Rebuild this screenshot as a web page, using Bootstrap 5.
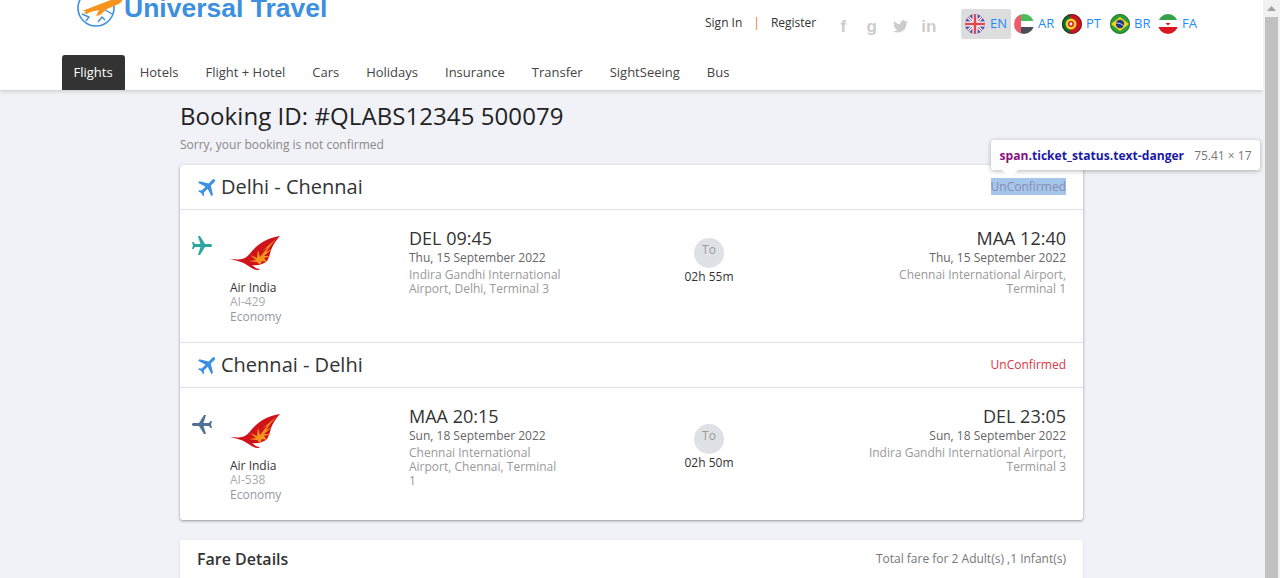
<!DOCTYPE html>
<html lang="en">

<head>
    <meta charset="UTF-8">
    <meta name="viewport" content="width=device-width, initial-scale=1">
    <title>Universal Travel - Booking</title>
    <link href="https://cdn.jsdelivr.net/npm/bootstrap@5.3.0/dist/css/bootstrap.min.css" rel="stylesheet">
    <style>
        html, body { height: 578px; overflow: hidden; }
        body {
            background: #f1f2f7;
            font-family: "Open Sans", "Liberation Sans", sans-serif;
            font-size: 12px;
            color: #333;
        }
        .page-area { width: 1263px; height: 578px; overflow: hidden; flex: none; }
        .fake-scroll { width: 17px; height: 578px; background: #f1f1f1; flex: none; position: relative; }
        .fake-arrow { height: 17px; display: flex; align-items: center; justify-content: center; }
        .fake-thumb { margin: 0 2px; background: #c1c1c1; height: 561px; }

        .site-head { background: #fff; height: 90px; box-shadow: 0 1px 4px rgba(0,0,0,.2); position: relative; }
        .head-wrap { width: 1139px; margin: 0 auto; }
        .head-top { height: 55px; overflow: hidden; }
        .brand-box { margin-left: 14px; width: 300px; height: 40px; margin-top: -40px; flex: none; }
        .brand-name { font-family: "Liberation Sans", sans-serif; font-weight: 700; font-size: 26.5px; color: #3d8fe0; line-height: 34px; margin-top: 0; }
        .sign-links { margin-left: 329px; width: 124px; margin-top: -9px; }
        .sign-links a { color: #333; text-decoration: none; }
        .sign-sep { color: #e8702a; margin: 0 11px; }
        .social-set { width: 117px; margin-top: -2px; color: #ccc; }
        .social-set span { width: 28.5px; text-align: center; font-weight: 700; font-size: 17px; line-height: 20px; font-family: "Liberation Sans", sans-serif; }
        .lang-set { margin-top: -7px; margin-left: 15px; }
        .lang-item { display: flex; align-items: center; height: 30px; width: 48px; padding-left: 3px; color: #1e8bff; font-size: 13px; text-decoration: none; gap: 4px; }
        .lang-item.on { background: #ddd; width: 50px; padding-left: 4px; gap: 5px; border-radius: 2px; }
        .lang-item svg { flex: none; }

        .tab-strip { height: 35px; gap: 3px; }
        .tab-link { color: #444; padding: 0 12px; line-height: 35px; font-size: 13px; text-decoration: none; border-radius: 3px 3px 0 0; }
        .tab-link.on { background: #333; color: #fff; padding: 0 12px 0 11.5px; }

        .body-wrap { width: 903px; margin: 0 auto; }
        .page-title { font-size: 24px; font-weight: 400; color: #222; margin: 0; line-height: 33px; padding-top: 9px; letter-spacing: .07px; }
        .page-note { color: #888; line-height: 17px; margin-top: 4px; margin-bottom: 12px; }

        .trip-card { border: 0; border-radius: 3px; box-shadow: 0 1px 3px rgba(0,0,0,.4); }
        .leg-head { height: 45px; padding: 0 17px 0 16px; border-bottom: 1px solid #e2e2e6; }
        .leg-title { font-size: 20px; color: #333; line-height: 26px; margin-left: 1px; }
        .leg-body { height: 133px; padding-top: 25px; border-bottom: 1px solid #e2e2e6; }
        .leg-body.last { height: 132px; border-bottom: 0; }
        .plane-col { width: 50px; padding-left: 10px; }
        .plane-col svg { margin-top: -1px; }
        .carrier-col { width: 179px; padding-top: 1px; }
        .carrier-name { color: #333; line-height: 14px; margin-top: 10px; }
        .soft-text { color: #999; line-height: 14px; }
        .carrier-code { color: #aaa; line-height: 14px; }
        .carrier-cabin { color: #949aa3; line-height: 15px; }
        .from-col { width: 153px; }
        .time-text { font-size: 18px; color: #333; line-height: 24px; margin-top: -9px; }
        .date-text { color: #666; line-height: 16px; margin-bottom: 2px; }
        .mid-col { width: 294px; text-align: center; }
        .to-dot { width: 30px; height: 30px; border-radius: 50%; background: #e0e1e6; color: #999; margin: 3px auto 0; line-height: 24px; }
        .leg-body.last .to-dot { margin-top: 11px; }
        .dur-text { color: #333; line-height: 17px; }
        .to-col { width: 210px; text-align: right; }

        .status-tag { color: #dc3545; position: relative; line-height: 17px; margin-bottom: 2px; }
        .status-tag.picked { color: #8b8bb5; background: #a4c6ea; }
        .dev-tip {
            position: absolute; left: 0; top: -38px; height: 30px; width: 269px;
            background: #fff; border-radius: 3px; box-shadow: 0 1px 5px rgba(0,0,0,.3);
            white-space: nowrap; line-height: 31px; padding-left: 9px; font-weight: 700; font-size: 12.1px; color: #1a1aa6;
        }
        .dev-tip::after {
            content: ""; position: absolute; left: 11px; top: 30px;
            border: 8px solid transparent; border-top-color: #fff; border-bottom: 0;
        }
        .dev-tip b { color: #881280; font-weight: 700; }
        .dev-tip i { font-style: normal; font-weight: 400; font-size: 12px; color: #777; margin-left: 10px; }

        .fare-card { margin-top: 20px; border: 0; border-radius: 3px; height: 60px; padding: 0 17px; box-shadow: 0 1px 3px rgba(0,0,0,.1); }
        .fare-head { height: 38px; }
        .fare-title { font-size: 16px; font-weight: 600; color: #333; }
        .fare-note { color: #777; }
    </style>
</head>

<body class="d-flex">
    <svg width="0" height="0" class="position-absolute">
        <defs>
            <path id="planeUp" d="M21 16v-2l-8-5V3.5c0-.83-.67-1.5-1.5-1.5S10 2.67 10 3.5V9l-8 5v2l8-2.5V19l-2 1.5V22l3.5-1 3.5 1v-1.5L13 19v-5.5l8 2.5z" />
            <g id="airLogo">
                <path fill="#d0131b" d="M50 0C38 2 29 7 22 15c-3 4-6 7-10 8-4 1-8 0-12 0 4 1 8 2 11 3 6 2 10 7 16 8 1 0 2 0 3-1-3 0-6-2-8-4 6 1 12-1 15-4 2-3 3-7 4-11 2-5 5-10 9-14z" />
                <path fill="#f7941d" d="M46 3 32 15l6-4-8 10-2-7-1 8-7-3 6 5-7 1 8 1 3 3 2-4 5 1-3-4 7-2-7 0 8-7-6 3 5-7z" />
            </g>
        </defs>
    </svg>

    <div class="page-area">
        <header class="site-head">
            <div class="head-wrap">
                <div class="head-top d-flex align-items-center">
                    <div class="brand-box d-flex align-items-center">
                        <svg width="48" height="40" viewBox="0 0 48 40" class="flex-shrink-0">
                            <circle cx="20" cy="20" r="18" fill="none" stroke="#3d8fe0" stroke-width="1.6" />
                            <path d="M6 26l7 3-3 4M22 34l4-5 3 3M26 20l10 6" fill="none" stroke="#3d8fe0" stroke-width="1.4" />
                            <path fill="#f7941d" d="M6 23 40 10c4-1 7 0 6 3-1 2-5 4-8 5l-7 3-7 6-4 1 3-6-9 2-3 2-3-1 2-2z" />
                        </svg>
                        <span class="brand-name text-nowrap">Universal Travel</span>
                    </div>
                    <div class="sign-links flex-shrink-0 d-flex text-nowrap">
                        <a href="#">Sign In</a><span class="sign-sep">|</span><a href="#">Register</a>
                    </div>
                    <div class="social-set d-flex align-items-center flex-shrink-0">
                        <span>f</span><span>g</span>
                        <span class="d-flex justify-content-center"><svg width="15" height="15" viewBox="0 0 24 24" fill="#ccc"><path d="M23.953 4.57a10 10 0 01-2.825.775 4.958 4.958 0 002.163-2.723c-.951.555-2.005.959-3.127 1.184a4.92 4.92 0 00-8.384 4.482C7.69 8.095 4.067 6.13 1.64 3.162a4.822 4.822 0 00-.666 2.475c0 1.71.87 3.213 2.188 4.096a4.904 4.904 0 01-2.228-.616v.06a4.923 4.923 0 003.946 4.827 4.996 4.996 0 01-2.212.085 4.936 4.936 0 004.604 3.417 9.867 9.867 0 01-6.102 2.105c-.39 0-.779-.023-1.17-.067a13.995 13.995 0 007.557 2.209c9.053 0 13.998-7.496 13.998-13.985 0-.21 0-.42-.015-.63A9.935 9.935 0 0024 4.59z"/></svg></span>
                        <span>in</span>
                    </div>
                    <div class="lang-set d-flex flex-shrink-0">
                        <a href="#" class="lang-item on">
                            <svg width="20" height="20" viewBox="0 0 20 20"><defs><clipPath id="cl"><circle cx="10" cy="10" r="10"/></clipPath></defs><g clip-path="url(#cl)"><rect width="20" height="20" fill="#4a5aa8"/><path d="M0 0 20 20M20 0 0 20" stroke="#fff" stroke-width="3"/><path d="M0 0 20 20M20 0 0 20" stroke="#e0465a" stroke-width="1"/><path d="M10 0V20M0 10H20" stroke="#fff" stroke-width="5"/><path d="M10 0V20M0 10H20" stroke="#e0465a" stroke-width="2.6"/></g></svg>
                            EN
                        </a>
                        <a href="#" class="lang-item">
                            <svg width="20" height="20" viewBox="0 0 20 20"><g clip-path="url(#cl)"><rect width="20" height="7" fill="#4cbb5c"/><rect y="7" width="20" height="6" fill="#fff"/><rect y="13" width="20" height="7" fill="#4a4f57"/><rect width="7" height="20" fill="#f05a6a"/></g></svg>
                            AR
                        </a>
                        <a href="#" class="lang-item">
                            <svg width="20" height="20" viewBox="0 0 20 20"><g clip-path="url(#cl)"><rect width="20" height="20" fill="#c9161d"/><rect width="8" height="20" fill="#0e6b2c"/><circle cx="9" cy="10" r="5.5" fill="#f2d12e"/><circle cx="9" cy="10" r="3" fill="#d8232a"/><circle cx="9" cy="10" r="1.4" fill="#fff"/></g><circle cx="10" cy="10" r="9.5" fill="none" stroke="#222" stroke-opacity=".6"/></svg>
                            PT
                        </a>
                        <a href="#" class="lang-item">
                            <svg width="20" height="20" viewBox="0 0 20 20"><g clip-path="url(#cl)"><rect width="20" height="20" fill="#2e9d3a"/><path d="M10 3 19 10 10 17 1 10z" fill="#f5d31c"/><circle cx="10" cy="10" r="4.2" fill="#1f3b86"/><path d="M6 9c3 0 6 1 8 3" stroke="#fff" stroke-width=".8" fill="none"/></g><circle cx="10" cy="10" r="9.5" fill="none" stroke="#185a22" stroke-opacity=".6"/></svg>
                            BR
                        </a>
                        <a href="#" class="lang-item">
                            <svg width="20" height="20" viewBox="0 0 20 20"><g clip-path="url(#cl)"><rect width="20" height="6" fill="#35a04a"/><rect y="6" width="20" height="7" fill="#fff"/><rect y="13" width="20" height="7" fill="#d8171e"/><path d="M7.5 9h5l-2.5 2.5z" fill="#d8171e"/></g></svg>
                            FA
                        </a>
                    </div>
                </div>
                <nav class="tab-strip d-flex">
                    <a href="#" class="tab-link on">Flights</a>
                    <a href="#" class="tab-link">Hotels</a>
                    <a href="#" class="tab-link">Flight + Hotel</a>
                    <a href="#" class="tab-link">Cars</a>
                    <a href="#" class="tab-link">Holidays</a>
                    <a href="#" class="tab-link">Insurance</a>
                    <a href="#" class="tab-link">Transfer</a>
                    <a href="#" class="tab-link">SightSeeing</a>
                    <a href="#" class="tab-link">Bus</a>
                </nav>
            </div>
        </header>

        <main class="body-wrap">
            <h1 class="page-title">Booking ID: #QLABS12345 500079</h1>
            <p class="page-note">Sorry, your booking is not confirmed</p>

            <div class="card trip-card">
                <div class="leg-head d-flex align-items-center justify-content-between">
                    <div class="d-flex align-items-center">
                        <svg width="24" height="24" viewBox="0 0 24 24" fill="#3d8fe0"><use href="#planeUp" transform="rotate(45 12 12)" /></svg>
                        <span class="leg-title">Delhi - Chennai</span>
                    </div>
                    <span class="status-tag picked">UnConfirmed
                        <span class="dev-tip"><b>span</b>.ticket_status.text-danger<i>75.41 × 17</i></span>
                    </span>
                </div>
                <div class="leg-body d-flex">
                    <div class="plane-col"><svg width="24" height="24" viewBox="0 0 24 24" fill="#2aa5a0"><use href="#planeUp" transform="rotate(90 12 12)" /></svg></div>
                    <div class="carrier-col">
                        <svg width="50" height="35" viewBox="0 0 50 35"><use href="#airLogo" /></svg>
                        <div class="carrier-name">Air India</div>
                        <div class="carrier-code">AI-429</div>
                        <div class="carrier-cabin">Economy</div>
                    </div>
                    <div class="from-col">
                        <div class="time-text">DEL 09:45</div>
                        <div class="date-text">Thu, 15 September 2022</div>
                        <div class="soft-text">Indira Gandhi International Airport, Delhi, Terminal 3</div>
                    </div>
                    <div class="mid-col">
                        <div class="to-dot">To</div>
                        <div class="dur-text">02h 55m</div>
                    </div>
                    <div class="to-col">
                        <div class="time-text">MAA 12:40</div>
                        <div class="date-text">Thu, 15 September 2022</div>
                        <div class="soft-text">Chennai International Airport, Terminal 1</div>
                    </div>
                </div>

                <div class="leg-head d-flex align-items-center justify-content-between">
                    <div class="d-flex align-items-center">
                        <svg width="24" height="24" viewBox="0 0 24 24" fill="#3d8fe0"><use href="#planeUp" transform="rotate(45 12 12)" /></svg>
                        <span class="leg-title">Chennai - Delhi</span>
                    </div>
                    <span class="status-tag">UnConfirmed</span>
                </div>
                <div class="leg-body last d-flex">
                    <div class="plane-col"><svg width="24" height="24" viewBox="0 0 24 24" fill="#4f7196"><use href="#planeUp" transform="rotate(270 12 12)" /></svg></div>
                    <div class="carrier-col">
                        <svg width="50" height="35" viewBox="0 0 50 35"><use href="#airLogo" /></svg>
                        <div class="carrier-name">Air India</div>
                        <div class="carrier-code">AI-538</div>
                        <div class="carrier-cabin">Economy</div>
                    </div>
                    <div class="from-col">
                        <div class="time-text">MAA 20:15</div>
                        <div class="date-text">Sun, 18 September 2022</div>
                        <div class="soft-text">Chennai International Airport, Chennai, Terminal 1</div>
                    </div>
                    <div class="mid-col">
                        <div class="to-dot">To</div>
                        <div class="dur-text">02h 50m</div>
                    </div>
                    <div class="to-col">
                        <div class="time-text">DEL 23:05</div>
                        <div class="date-text">Sun, 18 September 2022</div>
                        <div class="soft-text">Indira Gandhi International Airport, Terminal 3</div>
                    </div>
                </div>
            </div>

            <div class="card fare-card">
                <div class="fare-head d-flex align-items-center justify-content-between">
                    <span class="fare-title">Fare Details</span>
                    <span class="fare-note">Total fare for 2 Adult(s) ,1 Infant(s)</span>
                </div>
            </div>
        </main>
    </div>

    <div class="fake-scroll">
        <div class="fake-arrow"><svg width="9" height="5" viewBox="0 0 9 5"><path d="M4.5 0 9 5H0z" fill="#a3a3a3"/></svg></div>
        <div class="fake-thumb"></div>
    </div>

    <script src="https://cdn.jsdelivr.net/npm/bootstrap@5.3.0/dist/js/bootstrap.bundle.min.js"></script>
</body>

</html>
